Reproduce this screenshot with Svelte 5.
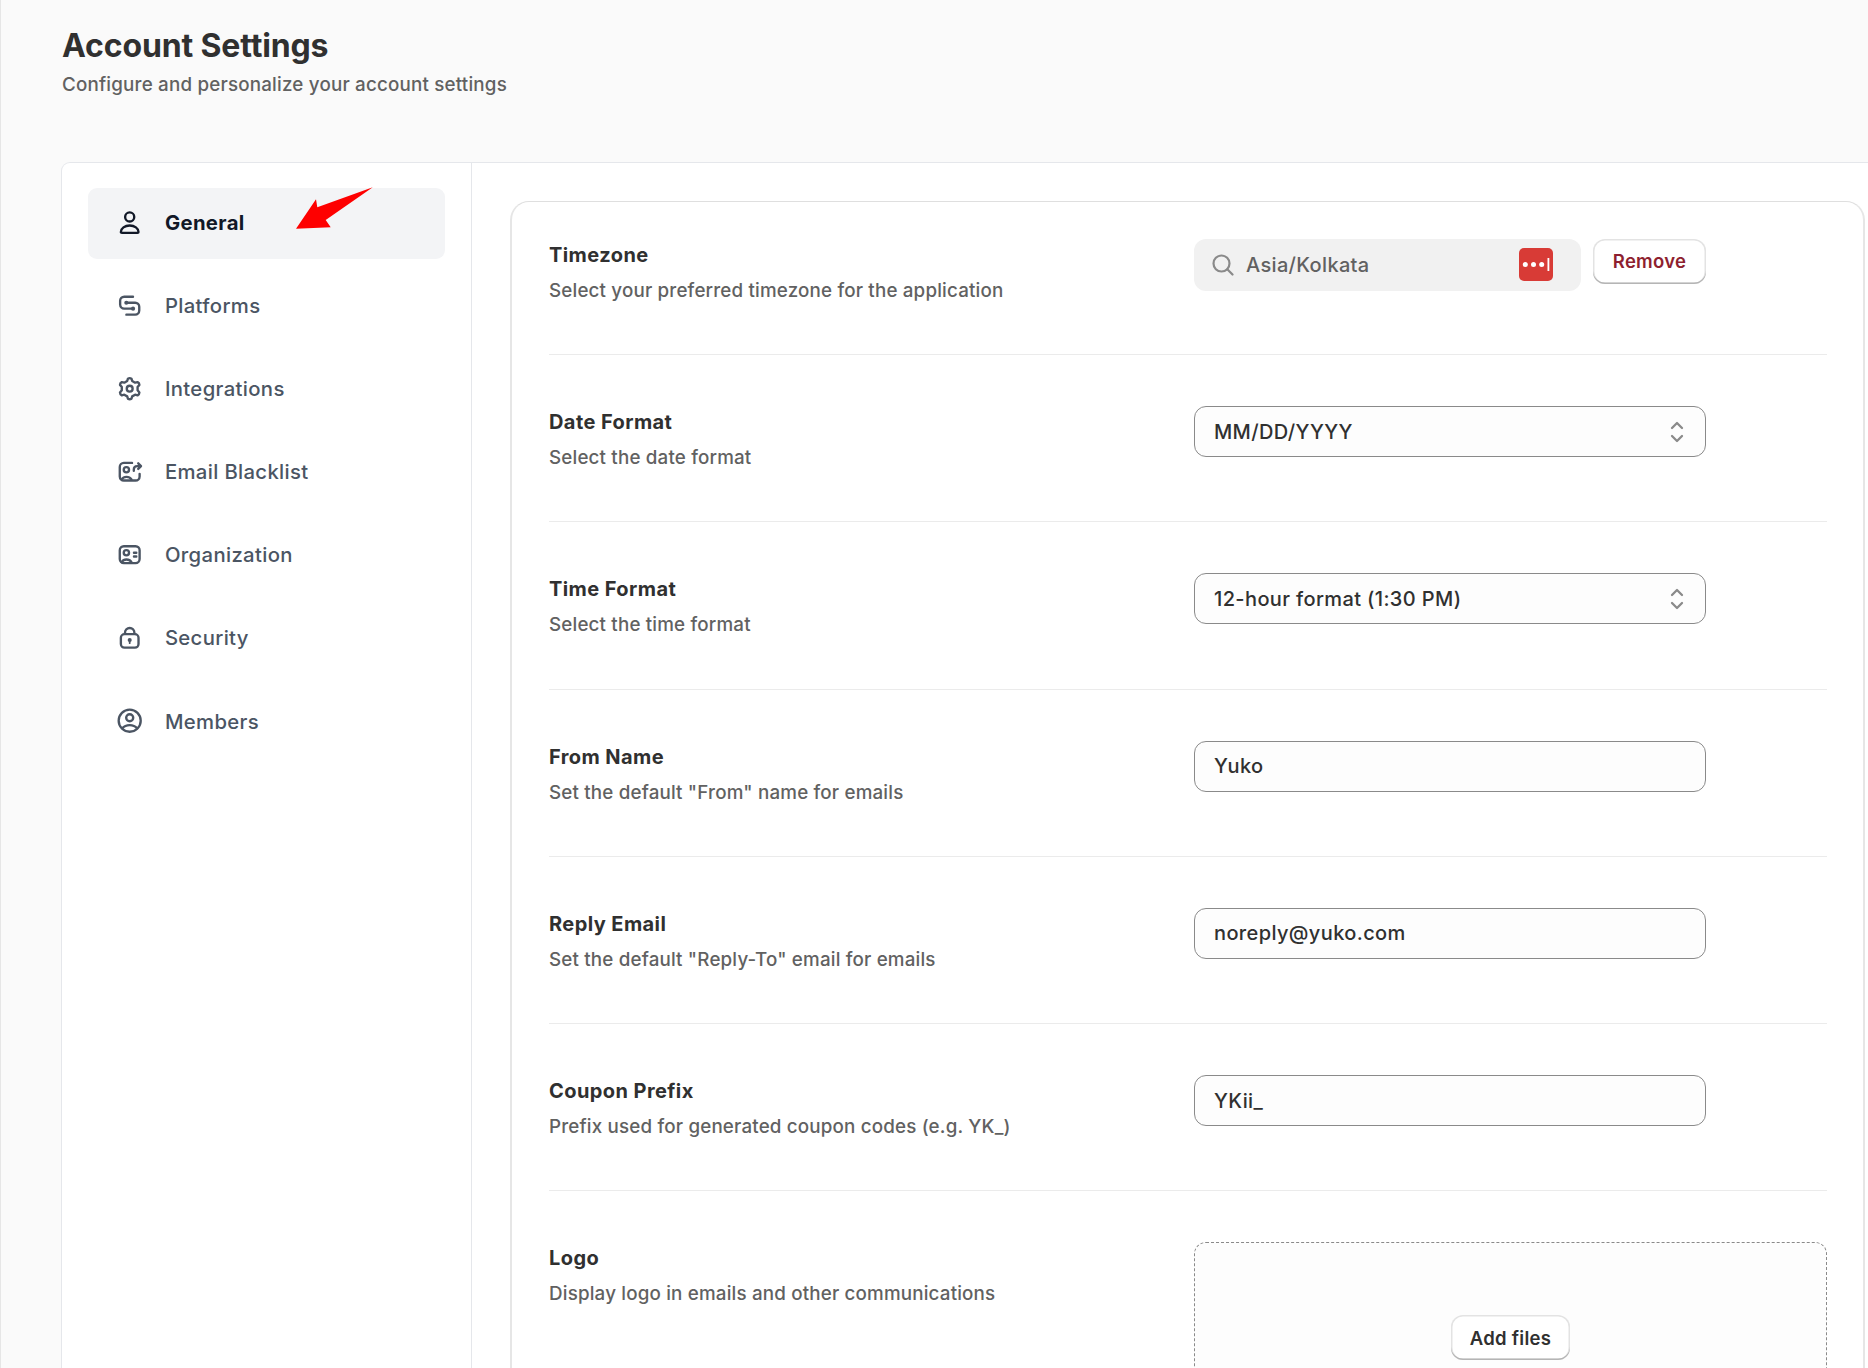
<script>
	const menu = [
		{ id: 'general', label: 'General' },
		{ id: 'platforms', label: 'Platforms' },
		{ id: 'integrations', label: 'Integrations' },
		{ id: 'blacklist', label: 'Email Blacklist' },
		{ id: 'organization', label: 'Organization' },
		{ id: 'security', label: 'Security' },
		{ id: 'members', label: 'Members' }
	];

	const rows = [
		{ id: 'timezone', type: 'timezone', label: 'Timezone', help: 'Select your preferred timezone for the application', value: 'Asia/Kolkata' },
		{ id: 'date', type: 'select', label: 'Date Format', help: 'Select the date format', value: 'MM/DD/YYYY' },
		{ id: 'time', type: 'select', label: 'Time Format', help: 'Select the time format', value: '12-hour format (1:30 PM)' },
		{ id: 'from', type: 'text', label: 'From Name', help: 'Set the default "From" name for emails', value: 'Yuko' },
		{ id: 'reply', type: 'text', label: 'Reply Email', help: 'Set the default "Reply-To" email for emails', value: 'noreply@yuko.com' },
		{ id: 'coupon', type: 'text', label: 'Coupon Prefix', help: 'Prefix used for generated coupon codes (e.g. YK_)', value: 'YKii_' },
		{ id: 'logo', type: 'upload', label: 'Logo', help: 'Display logo in emails and other communications' }
	];

	let current = 'general';
</script>

<style>
	:global(body) {
		background: #fafafa;
	}

	.page {
		box-sizing: border-box;
		width: 1868px;
		height: 1368px;
		overflow: hidden;
		padding-left: 60px;
		border-left: 1px solid #e6e6e6;
		font-family: Inter, 'Liberation Sans', sans-serif;
		font-weight: 450;
		color: #303030;
		display: flex;
		flex-direction: column;
	}

	header {
		height: 135px;
		padding: 27px 0 0 1px;
	}

	h1 {
		margin: 0;
		font-size: 32px;
		font-weight: 650;
		line-height: 38px;
		letter-spacing: -0.14px;
	}

	header p {
		margin: 6px 0 0;
		font-size: 18.8px;
		line-height: 28px;
		letter-spacing: 0.19px;
		color: #616161;
	}

	.card {
		flex: 1;
		display: flex;
		margin-right: -20px;
		background: #fff;
		border: 1px solid #e5e7eb;
		border-bottom: 0;
		border-radius: 9px 0 0 0;
	}

	nav {
		box-sizing: border-box;
		flex: none;
		width: 410px;
		padding: 25px 26px;
		border-right: 1px solid #e5e7eb;
		display: flex;
		flex-direction: column;
		gap: 12.1px;
	}

	.item {
		position: relative;
		box-sizing: border-box;
		height: 71px;
		padding: 0 27px 2px;
		border: 0;
		border-radius: 9px;
		background: none;
		color: #4b5563;
		font: inherit;
		font-size: 20.3px;
		font-weight: 450;
		letter-spacing: 0.35px;
		display: flex;
		align-items: center;
		gap: 20.5px;
	}

	.item.active {
		background: #f3f4f6;
		color: #111827;
		font-weight: 650;
	}

	.item svg {
		flex: none;
		width: 29.4px;
		height: 29.4px;
		fill: none;
		stroke: currentColor;
		stroke-width: 1.6;
		stroke-linecap: round;
		stroke-linejoin: round;
	}

	.item svg .dot {
		fill: currentColor;
		stroke: none;
	}

	.item .pointer {
		position: absolute;
		left: 207px;
		top: -2px;
		width: 80px;
		height: 44px;
		fill: #fe0000;
		stroke: none;
	}

	main {
		flex: none;
		box-sizing: border-box;
		width: 1355px;
		margin: 38px 0 0 38px;
		padding: 0 36px 0 37px;
		border: 2px solid #e6e6e6;
		border-top: 1px solid #dfdfdf;
		border-bottom: 0;
		border-radius: 19px 19px 0 0;
	}

	.row {
		box-sizing: border-box;
		height: 167.3px;
		padding-top: 51px;
		border-bottom: 1px solid #ebebeb;
		display: grid;
		grid-template-columns: 645px 1fr;
		align-items: start;
	}

	.row:first-child {
		height: 153px;
		padding-top: 37px;
	}

	.row:last-child {
		border: 0;
	}

	.label {
		margin-top: 2px;
		font-size: 20px;
		font-weight: 650;
		line-height: 29px;
		letter-spacing: 0.42px;
	}

	.help {
		margin-top: 6px;
		font-size: 18.8px;
		line-height: 29px;
		letter-spacing: 0.17px;
		color: #616161;
	}

	.field {
		box-sizing: border-box;
		width: 512px;
		height: 51px;
		padding: 0 19px;
		border: 1px solid #8a8a8a;
		border-radius: 12px;
		background: #fdfdfd;
		font-size: 20px;
		letter-spacing: 0.37px;
		display: flex;
		align-items: center;
		justify-content: space-between;
	}

	.field svg {
		width: 18px;
		height: 24px;
		fill: none;
		stroke: #8a8a8a;
		stroke-width: 2.3;
		stroke-linecap: round;
		stroke-linejoin: round;
	}

	.timezone {
		display: flex;
		gap: 12px;
		align-items: flex-start;
	}

	.search {
		box-sizing: border-box;
		width: 387px;
		height: 52px;
		padding: 0 28px 1px 18px;
		border-radius: 12px;
		background: #f1f1f1;
		color: #616161;
		font-size: 20px;
		letter-spacing: 0.33px;
		display: flex;
		align-items: center;
	}

	.search span {
		flex: 1;
		margin-left: 12px;
	}

	.search svg {
		flex: none;
	}

	.button {
		box-sizing: border-box;
		height: 45px;
		padding: 0 19px;
		border: 0;
		border-radius: 12px;
		background: #fff;
		box-shadow: inset 0 -1.5px 0 #b5b5b5, inset 0 0 0 1.5px #e3e3e3;
		font: inherit;
		font-size: 18.5px;
		font-weight: 600;
		letter-spacing: 0.27px;
		color: #303030;
	}

	.button.critical {
		width: 113px;
		padding: 0 0 2px;
		color: #8e1f2f;
	}

	.upload {
		box-sizing: border-box;
		width: 633px;
		height: 174px;
		border: 1px dashed #8a8a8a;
		border-radius: 12px;
		background: #fdfdfd;
		display: flex;
		align-items: flex-end;
		justify-content: center;
		padding-bottom: 55px;
	}
</style>

<div class="page">
	<header>
		<h1>Account Settings</h1>
		<p>Configure and personalize your account settings</p>
	</header>

	<div class="card">
		<nav>
			{#each menu as item}
				<button class="item" class:active={current == item.id} on:click={() => (current = item.id)}>
					<svg viewBox="0 0 20 20">
						{#if item.id == 'general'}
							<circle cx="10" cy="6.1" r="3.1" />
							<path d="M10 11.9c3.3 0 6 2 6 4.4 0 .4-.3.6-.7.6H4.7c-.4 0-.7-.2-.7-.6 0-2.4 2.7-4.4 6-4.4z" />
						{:else if item.id == 'platforms'}
							<path d="M12.25 3.9h-6A2.75 2.75 0 0 0 3.5 6.65v2.6A2.75 2.75 0 0 0 6.25 12h6" />
							<path d="M7.75 16.1h6a2.75 2.75 0 0 0 2.75-2.75v-2.6A2.75 2.75 0 0 0 13.75 8h-6" />
							<circle class="dot" cx="7.7" cy="8" r="1.4" />
							<circle class="dot" cx="12.3" cy="12" r="1.4" />
						{:else if item.id == 'integrations'}
							<path d="M8.8 3.2Q10 2.4 11.2 3.2L11.7 4.77 13.68 5.91 15.4 5.5Q16.6 6 16.6 7.4L15.38 8.86V11.14L16.6 12.6Q16.6 14 15.4 14.5L13.68 14.09 11.7 15.23 11.2 16.8Q10 17.6 8.8 16.8L8.3 15.23 6.32 14.09 4.6 14.5Q3.4 14 3.4 12.6L4.62 11.14V8.86L3.4 7.4Q3.4 6 4.6 5.5L6.32 5.91 8.3 4.77z" />
							<circle cx="10" cy="10" r="2" />
						{:else if item.id == 'blacklist'}
							<path d="M11.6 4H6A2.75 2.75 0 0 0 3.25 6.75v6.5A2.75 2.75 0 0 0 6 16h8a2.75 2.75 0 0 0 2.75-2.75v-1.8" />
							<circle cx="7.75" cy="8.7" r="1.8" />
							<path d="M4.6 15.2c.7-1.2 1.9-1.7 3.2-1.7s2.6.5 3.4 1.8" />
							<path d="M12.8 9.4v-.9c0-1.4.9-2.3 2.3-2.3h2.3M15.8 4.3l1.9 1.9-1.9 1.9" />
						{:else if item.id == 'organization'}
							<rect x="3.25" y="4.25" width="13.5" height="11.5" rx="2.75" />
							<circle cx="7.75" cy="8.7" r="1.8" />
							<path d="M4.6 15c.7-1.2 1.9-1.7 3.2-1.7s2.6.5 3.4 1.8" />
							<path d="M12.9 8.7h1.6M12.9 11.2h1.6" />
						{:else if item.id == 'security'}
							<rect x="4" y="7.6" width="12" height="9.2" rx="2.5" />
							<path d="M6.8 7.4v-.8a3.2 3.2 0 0 1 6.4 0v.8" />
							<circle class="dot" cx="10" cy="11.6" r="1.4" />
							<path d="M10 12v1.7" stroke-width="1.2" />
						{:else}
							<circle cx="10" cy="10" r="7.5" />
							<circle cx="10" cy="8" r="2.4" />
							<path d="M5 15.2c1.2-1.5 3-2.2 5-2.2s3.8.7 5 2.2" />
						{/if}
					</svg>
					<span>{item.label}</span>
					{#if item.id == 'general'}
						<svg class="pointer" viewBox="0 0 80 44">
							<path d="M77.8 1.3 22.3 21.3 21 13.3 1 42.7 35.7 41.3 30.7 34z" />
						</svg>
					{/if}
				</button>
			{/each}
		</nav>

		<main>
			{#each rows as row}
				<div class="row">
					<div>
						<div class="label">{row.label}</div>
						<div class="help">{row.help}</div>
					</div>
					{#if row.type == 'timezone'}
						<div class="timezone">
							<div class="search">
								<svg width="22" height="22" viewBox="0 0 22 22" fill="none" stroke="#8a8a8a" stroke-width="2.2" stroke-linecap="round">
									<circle cx="9.5" cy="9.5" r="8" />
									<path d="M15.3 15.3 20.5 20.5" />
								</svg>
								<span>{row.value}</span>
								<svg width="34" height="33" viewBox="0 0 34 33">
									<rect width="34" height="33" rx="5" fill="#d83b36" />
									<circle cx="6.3" cy="16.5" r="2.5" fill="#fff" />
									<circle cx="14.5" cy="16.5" r="2.5" fill="#fff" />
									<circle cx="22.7" cy="16.5" r="2.5" fill="#fff" />
									<rect x="28.5" y="10" width="1.8" height="13" fill="#fff" />
								</svg>
							</div>
							<button class="button critical">Remove</button>
						</div>
					{:else if row.type == 'upload'}
						<div class="upload">
							<button class="button">Add files</button>
						</div>
					{:else}
						<div class="field">
							<span>{row.value}</span>
							{#if row.type == 'select'}
								<svg viewBox="0 0 18 24">
									<path d="M4 8 9 3l5 5M4 16l5 5 5-5" />
								</svg>
							{/if}
						</div>
					{/if}
				</div>
			{/each}
		</main>
	</div>
</div>
